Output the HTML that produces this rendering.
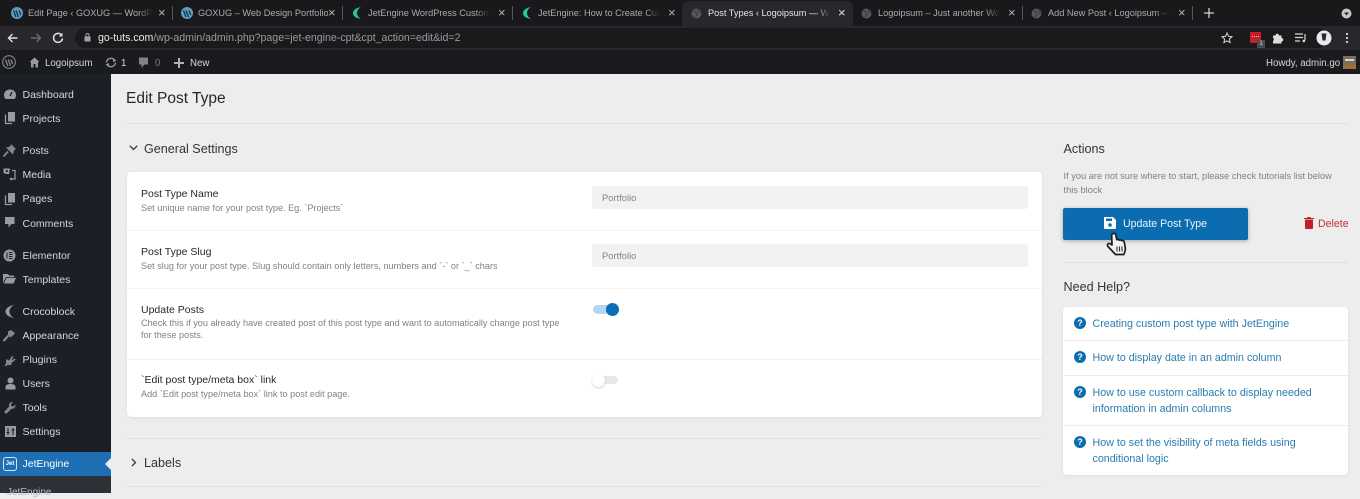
<!DOCTYPE html>
<html><head><meta charset="utf-8"><style>
html,body{margin:0;padding:0}
body{width:1360px;height:493px;overflow:hidden;position:relative;background:#ededed;font-family:"Liberation Sans",sans-serif}
.a,.t{position:absolute;white-space:nowrap}
.tabtxt{position:absolute;top:7px;font-size:9.2px;line-height:12px;color:#a9abae;white-space:nowrap;overflow:hidden;-webkit-mask-image:linear-gradient(90deg,#000 88%,transparent);mask-image:linear-gradient(90deg,#000 88%,transparent)}
.x{position:absolute;top:6px;font-size:13px;line-height:14px;color:#b0b2b5}
.sep{position:absolute;top:6px;width:1px;height:14px;background:#55575a}
.m{position:absolute;left:22.5px;font-size:10.5px;line-height:14px;color:#d5d7d9;white-space:nowrap}
.ttl{position:absolute;left:141px;font-size:10.5px;line-height:13px;color:#23282d;white-space:nowrap}
.dsc{position:absolute;left:141px;font-size:9.15px;line-height:12px;color:#7d8287;white-space:nowrap}
.inp{position:absolute;left:592px;width:436px;height:23px;background:#f2f2f2;border-radius:3px;font-size:9.4px;line-height:23px;color:#80858a;text-indent:10px}
.hl{position:absolute;left:1064px;width:284px;height:1px;background:#ebedef}
.lnk{position:absolute;left:1092.5px;font-size:10.7px;line-height:16px;color:#2a7cb0;white-space:nowrap}
.q{position:absolute;left:1074px;width:12px;height:12px;border-radius:50%;background:#0b6cb0;color:#fff;font-size:9px;font-weight:bold;line-height:12px;text-align:center}
svg{position:absolute;overflow:visible}
</style></head><body>
<!-- browser chrome -->
<div class="a" style="left:0;top:0;width:1360px;height:26px;background:#19191b"></div>
<div class="a" style="left:682px;top:1px;width:171px;height:25px;background:#28282c;border-radius:7px 7px 0 0"></div>
<div class="a" style="left:0;top:26px;width:1360px;height:24px;background:#28282c"></div>
<div class="a" style="left:75px;top:28px;width:1253px;height:20px;background:#1a1a1c;border-radius:10px"></div>
<div class="a" style="left:0;top:50px;width:1360px;height:24px;background:#191b1f"></div>

<svg style="left:11px;top:7px" width="12" height="12"><circle cx="6" cy="6" r="6" fill="#5c9bc4"/><path d="M2.5 3.500L5 10M5 3.500L7.500 10M8 3.500L9.800 8" stroke="#1d2c38" stroke-width="1.200" fill="none"/></svg>
<div class="tabtxt" style="left:28px;width:125px">Edit Page ‹ GOXUG — WordPress</div><div class="x" style="left:158px">×</div><div class="sep" style="left:172px"></div>
<svg style="left:181px;top:7px" width="12" height="12"><circle cx="6" cy="6" r="6" fill="#5c9bc4"/><path d="M2.5 3.500L5 10M5 3.500L7.500 10M8 3.500L9.800 8" stroke="#1d2c38" stroke-width="1.200" fill="none"/></svg>
<div class="tabtxt" style="left:198px;width:130px;-webkit-mask-image:none;mask-image:none">GOXUG – Web Design Portfolio</div><div class="x" style="left:328px">×</div><div class="sep" style="left:342px"></div>
<svg style="left:352px;top:7px" width="10" height="12"><path d="M9 0C3 1 1 4 1 6c0 2.500 2 5 8 6-2.500-1.500-4-3.500-4-6s1.500-4.500 4-6z" fill="#25c79c"/></svg>
<div class="tabtxt" style="left:368px;width:122px">JetEngine WordPress Custom Post</div><div class="x" style="left:498px">×</div><div class="sep" style="left:512px"></div>
<svg style="left:522px;top:7px" width="10" height="12"><path d="M9 0C3 1 1 4 1 6c0 2.500 2 5 8 6-2.500-1.500-4-3.500-4-6s1.500-4.500 4-6z" fill="#25c79c"/></svg>
<div class="tabtxt" style="left:538px;width:122px">JetEngine: How to Create Custom</div><div class="x" style="left:668px">×</div>
<svg style="left:691px;top:8px" width="11" height="11"><circle cx="5.500" cy="5.500" r="5" fill="#55575b"/><path d="M2 3l3 1 1 3-2 2M7 1l1 3 2 1" stroke="#38393c" fill="none"/></svg>
<div class="tabtxt" style="left:708px;width:122px;color:#e4e5e6">Post Types ‹ Logoipsum — WordPress</div><div class="x" style="left:838px;color:#e0e0e0">×</div>
<svg style="left:861px;top:8px" width="11" height="11"><circle cx="5.500" cy="5.500" r="5" fill="#55575b"/><path d="M2 3l3 1 1 3-2 2M7 1l1 3 2 1" stroke="#38393c" fill="none"/></svg>
<div class="tabtxt" style="left:878px;width:122px">Logoipsum – Just another WordPress</div><div class="x" style="left:1008px">×</div><div class="sep" style="left:1022px"></div>
<svg style="left:1031px;top:8px" width="11" height="11"><circle cx="5.500" cy="5.500" r="5" fill="#55575b"/><path d="M2 3l3 1 1 3-2 2M7 1l1 3 2 1" stroke="#38393c" fill="none"/></svg>
<div class="tabtxt" style="left:1048px;width:122px">Add New Post ‹ Logoipsum — WordPress</div><div class="x" style="left:1178px">×</div><div class="sep" style="left:1192px"></div>
<svg style="left:1204px;top:8px" width="10" height="10"><path d="M5 0v10M0 5h10" stroke="#d0d1d3" stroke-width="1.300"/></svg>
<svg style="left:1341px;top:8px" width="11" height="11"><circle cx="5.500" cy="5.500" r="5" fill="#c5c6c8"/><path d="M3 4.500h5L5.500 7.500z" fill="#28282c"/></svg>

<!-- toolbar -->
<svg style="left:7px;top:32px" width="12" height="12"><path d="M10.500 6H1.500M5.500 2L1.500 6l4 4" stroke="#dedfe0" stroke-width="1.400" fill="none"/></svg>
<svg style="left:30px;top:32px" width="12" height="12"><path d="M1 6h9.500M6.500 2l4 4-4 4" stroke="#6a6b6e" stroke-width="1.400" fill="none"/></svg>
<svg style="left:52px;top:32px" width="12" height="12"><path d="M9.700 3.200A4.500 4.500 0 1 0 10.500 6.500" stroke="#dedfe0" stroke-width="1.500" fill="none"/><path d="M10.500 0.800v3.700H6.800z" fill="#dedfe0"/></svg>
<svg style="left:84px;top:33px" width="7" height="9"><rect x="0.500" y="3.500" width="6" height="5" rx=".5" fill="#a2a3a6"/><path d="M2 3.500V2a1.500 1.500 0 0 1 3 0v1.500" stroke="#a2a3a6" fill="none"/></svg>
<div class="t" style="left:98px;top:31px;font-size:10.600px;line-height:14px;color:#9a9b9e"><span style="color:#e6e7e8">go-tuts.com</span>/wp-admin/admin.php?page=jet-engine-cpt&amp;cpt_action=edit&amp;id=2</div>
<svg style="left:1221px;top:32px" width="12" height="12"><path d="M6 1l1.500 3.300 3.500.4-2.600 2.400.7 3.500L6 8.800l-3.100 1.800.7-3.500L1 4.700l3.500-.4z" stroke="#d5d6d8" fill="none"/></svg>
<div class="a" style="left:1250px;top:32px;width:11px;height:11px;background:#c3202b"></div>
<div class="a" style="left:1252px;top:36px;width:7px;height:1px;border-top:1px dotted #f2c0c3"></div>
<div class="a" style="left:1257px;top:40px;width:8px;height:8px;background:#4b4c4f;color:#ddd;font-size:6px;line-height:8px;text-align:center">1</div>
<svg style="left:1272px;top:32px" width="12" height="12"><path d="M1 3.500h2.500a1.700 1.700 0 0 1 3.400 0H9.500V6a1.700 1.700 0 0 1 0 3.400V11.500H1V9a1.700 1.700 0 0 0 0-3z" fill="#dcdddf"/></svg>
<svg style="left:1295px;top:33px" width="12" height="10"><path d="M0 1h8M0 4.500h8M0 8h5" stroke="#d5d6d8" stroke-width="1.200"/><path d="M10 1v6.500" stroke="#d5d6d8" stroke-width="1.200"/><circle cx="8.800" cy="8" r="1.300" fill="#d5d6d8"/></svg>
<svg style="left:1316px;top:30px" width="16" height="16"><circle cx="8" cy="8" r="7.500" fill="#e9eaeb"/><path d="M5.500 3.500h5L9.500 10.500h-3z" fill="#28282c"/></svg>
<svg style="left:1345px;top:32px" width="4" height="12"><circle cx="2" cy="2" r="1.100" fill="#d5d6d8"/><circle cx="2" cy="6" r="1.100" fill="#d5d6d8"/><circle cx="2" cy="10" r="1.100" fill="#d5d6d8"/></svg>

<!-- admin bar -->
<svg style="left:2px;top:55px" width="14" height="14"><circle cx="7" cy="7" r="6.300" fill="none" stroke="#85888c" stroke-width="1.100"/><path d="M3.500 4.500L5.800 11M6.300 4.500L8.500 11M9 4.500l1.500 4.500" stroke="#85888c" stroke-width="1.300" fill="none"/></svg>
<svg style="left:29px;top:57px" width="11" height="11"><path d="M5.500 0.500L10.500 5H9v5.500H6.500V7h-2v3.500H2V5H.5z" fill="#989a9d"/></svg>
<div class="t" style="left:45px;top:57px;font-size:9.700px;line-height:13px;color:#d6d8da">Logoipsum</div>
<svg style="left:105px;top:57px" width="12" height="11"><path d="M1.500 5.500a4.500 4.500 0 0 1 8-2.500M10.500 5.500a4.500 4.500 0 0 1-8 2.500" stroke="#989a9d" stroke-width="1.300" fill="none"/><path d="M8 1l3.500 2.800L8 5zM4 6L.5 7.500 4 10z" fill="#989a9d"/></svg>
<div class="t" style="left:121px;top:57px;font-size:9.700px;line-height:13px;color:#d6d8da">1</div>
<svg style="left:138px;top:57px" width="11" height="12"><path d="M1 .5h9v7H6.500L3.500 11V7.500H1z" fill="#808285"/></svg>
<div class="t" style="left:155px;top:57px;font-size:9.700px;line-height:13px;color:#777a7d">0</div>
<svg style="left:174px;top:58px" width="10" height="10"><path d="M5 0v10M0 5h10" stroke="#b0b2b4" stroke-width="2"/></svg>
<div class="t" style="left:190px;top:57px;font-size:9.700px;line-height:13px;color:#d6d8da">New</div>
<div class="t" style="left:1266px;top:57px;font-size:9.700px;line-height:13px;color:#d6d8da">Howdy, admin.go</div>
<div class="a" style="left:1343px;top:56px;width:13px;height:13px;background:#7d705a"></div>
<div class="a" style="left:1345px;top:59px;width:9px;height:2px;background:#d5d5ce"></div>
<div class="a" style="left:1343px;top:65px;width:13px;height:4px;background:#a06f38"></div>

<!-- sidebar -->
<div class="a" style="left:0;top:74px;width:111px;height:419px;background:#1c2026"></div>
<svg style="left:4px;top:88px" width="12" height="12"><path d="M0 7a6 5.500 0 0 1 12 0c0 1.500-.5 3-1.500 4h-9C.5 10 0 8.500 0 7z" fill="#999b9e"/><path d="M6 8l2-4" stroke="#1c2026" stroke-width="1.300"/></svg>
<div class="m" style="top:88px">Dashboard</div>
<svg style="left:5px;top:112px" width="10" height="12"><path d="M3 0h7v9.500H3z" fill="#999b9e"/><path d="M.500 2.500v9h6.500" stroke="#999b9e" stroke-width="1.300" fill="none"/></svg>
<div class="m" style="top:112px">Projects</div>
<svg style="left:3px;top:144px" width="13" height="13"><path d="M8 0l5 5-1.500.8-1 2.200-.5 2.500L3 3.500 5.500 3 7.500 2z" fill="#85888b"/><path d="M5 7.500L.5 12.500" stroke="#85888b" stroke-width="1.800"/></svg>
<div class="m" style="top:144px">Posts</div>
<svg style="left:3px;top:168px" width="13" height="13"><path d="M.5 0.500h6l.8 1.500h-1v4H3.500L.5 5z" fill="#999b9e"/><circle cx="3.800" cy="3" r="1.100" fill="#1c2026"/><path d="M9 2.500h3V11h-4" stroke="#999b9e" stroke-width="1.200" fill="none"/><circle cx="8" cy="11" r="1.200" fill="#999b9e"/></svg>
<div class="m" style="top:168px">Media</div>
<svg style="left:5px;top:193px" width="10" height="12"><path d="M3 0h7v9.500H3z" fill="#999b9e"/><path d="M.500 2.500v9h6.500" stroke="#999b9e" stroke-width="1.300" fill="none"/></svg>
<div class="m" style="top:192px">Pages</div>
<svg style="left:5px;top:217px" width="10" height="12"><path d="M0 0h9.500v7H6.500L3.500 10.500V7H0z" fill="#999b9e"/></svg>
<div class="m" style="top:217px">Comments</div>
<svg style="left:3px;top:249px" width="13" height="13"><circle cx="6.500" cy="6.500" r="6" fill="#999b9e"/><path d="M4 3.500v6M6 3.500h3.500M6 5.500h3.500M6 7.500h3.500M6 9.500h3.500" stroke="#1c2026" stroke-width="1"/></svg>
<div class="m" style="top:249px">Elementor</div>
<svg style="left:3px;top:273px" width="13" height="11"><path d="M0 1h5l1 1.500h5V4H3L0 10z" fill="#999b9e"/><path d="M3.500 4.800H13L10.500 10.500H1z" fill="#999b9e"/></svg>
<div class="m" style="top:273px">Templates</div>
<svg style="left:5px;top:305px" width="9" height="13"><path d="M9 0C3 1 .5 4 .5 6.500S3 12 9 13C6.500 11.500 4.500 9.500 4.500 6.500S6.500 1.500 9 0z" fill="#999b9e"/></svg>
<div class="m" style="top:305px">Crocoblock</div>
<svg style="left:3px;top:329px" width="13" height="13"><path d="M5 2.500L8 1l4 3-2 2.500-2.500 2L5 6z" fill="#85888b"/><path d="M5.500 6.500L.5 12" stroke="#85888b" stroke-width="2.200"/></svg>
<div class="m" style="top:329px">Appearance</div>
<svg style="left:4px;top:354px" width="12" height="12"><path d="M2 5L5 6.500 8 2l1.500 1L7 6.500l4-2 .5 1.300L8 8.500 7 11H3.500L2.500 12H.5L2 9.500z" fill="#85888b"/></svg>
<div class="m" style="top:353px">Plugins</div>
<svg style="left:5px;top:377px" width="11" height="13"><circle cx="5.500" cy="3.500" r="3" fill="#999b9e"/><path d="M.5 12.500V10c0-2 2-3 5-3s5 1 5 3v2.500z" fill="#999b9e"/></svg>
<div class="m" style="top:377px">Users</div>
<svg style="left:4px;top:402px" width="12" height="12"><path d="M11.500 2.500l-2 2-2-.5-.5-2 2-1.800C7 -.5 5 1 5 3c0 .7.200 1 .200 1.500L.5 9.500c-.5 1 1 2.500 2 2L7.500 6.800C9.800 7.300 12 5 11.500 2.500z" fill="#85888b"/></svg>
<div class="m" style="top:401px">Tools</div>
<svg style="left:5px;top:426px" width="11" height="11"><rect width="11" height="11" fill="#999b9e"/><path d="M3 2v7M8 2v7M1.500 6.500h3M6.500 4h3" stroke="#1c2026" stroke-width="1.100"/></svg>
<div class="m" style="top:425px">Settings</div>
<div class="a" style="left:0;top:452px;width:111px;height:24px;background:#1f6fb5"></div>
<div class="a" style="left:3px;top:457px;width:14px;height:14px;border:1px solid #d5e4f2;border-radius:3px;box-sizing:border-box;color:#fff;font-size:6px;font-weight:bold;line-height:12px;text-align:center">Jet</div>
<div class="m" style="top:457px;color:#fff">JetEngine</div>
<div class="a" style="left:105px;top:458px;width:0;height:0;border-top:6px solid transparent;border-bottom:6px solid transparent;border-right:6px solid #ededed"></div>
<div class="a" style="left:0;top:476px;width:111px;height:17px;background:#2c3137"></div>
<div class="t" style="left:7px;top:486px;font-size:10px;line-height:13px;color:#b4b8bc">JetEngine</div>

<!-- heading -->
<div class="t" style="left:126px;top:89px;font-size:15.500px;line-height:19px;color:#23282d">Edit Post Type</div>
<div class="a" style="left:126px;top:123px;width:1222px;height:1px;background:#e1e2e3"></div>
<svg style="left:129px;top:145px" width="9" height="6"><path d="M.8.800L4.500 4.500 8.200.800" stroke="#30363b" stroke-width="1.300" fill="none"/></svg>
<div class="t" style="left:144px;top:142px;font-size:12.600px;line-height:15px;color:#2f353a">General Settings</div>

<!-- card -->
<div class="a" style="left:127px;top:172px;width:915px;height:245px;background:#fff;border-radius:4px;box-shadow:0 1px 3px rgba(0,0,0,.07)"></div>
<div class="a" style="left:127px;top:230px;width:915px;height:1px;background:#f5f5f6"></div>
<div class="a" style="left:127px;top:288px;width:915px;height:1px;background:#f3f3f4"></div>
<div class="a" style="left:127px;top:359px;width:915px;height:1px;background:#f0f0f1"></div>
<div class="ttl" style="top:188px">Post Type Name</div>
<div class="dsc" style="top:202px">Set unique name for your post type. Eg. `Projects`</div>
<div class="inp" style="top:186px">Portfolio</div>
<div class="ttl" style="top:246px">Post Type Slug</div>
<div class="dsc" style="top:260px">Set slug for your post type. Slug should contain only letters, numbers and `-` or `_` chars</div>
<div class="inp" style="top:244px">Portfolio</div>
<div class="ttl" style="top:304px">Update Posts</div>
<div class="dsc" style="top:317px">Check this if you already have created post of this post type and want to automatically change post type</div>
<div class="dsc" style="top:329px">for these posts.</div>
<div class="a" style="left:593px;top:305px;width:24px;height:9px;background:#b7d6ec;border-radius:5px"></div>
<div class="a" style="left:606px;top:303px;width:13px;height:13px;background:#0b6cb8;border-radius:50%"></div>
<div class="ttl" style="top:374px">`Edit post type/meta box` link</div>
<div class="dsc" style="top:388px">Add `Edit post type/meta box` link to post edit page.</div>
<div class="a" style="left:593px;top:376px;width:25px;height:8px;background:#e7e7e8;border-radius:4px"></div>
<div class="a" style="left:592px;top:374px;width:13px;height:13px;background:#fff;border-radius:50%;box-shadow:0 1px 2px rgba(0,0,0,.2)"></div>

<div class="a" style="left:127px;top:438px;width:914px;height:1px;background:#dddedf"></div>
<svg style="left:131px;top:458px" width="6" height="9"><path d="M.8.800L4.500 4.500.8 8.200" stroke="#30363b" stroke-width="1.300" fill="none"/></svg>
<div class="t" style="left:144px;top:456px;font-size:12.600px;line-height:15px;color:#2f353a">Labels</div>
<div class="a" style="left:127px;top:486px;width:914px;height:1px;background:#dddedf"></div>

<!-- right column -->
<div class="t" style="left:1063.500px;top:142px;font-size:12.600px;line-height:15px;color:#2f353a">Actions</div>
<div class="t" style="left:1063.500px;top:168.500px;font-size:9.270px;line-height:14.500px;color:#7d8287">If you are not sure where to start, please check tutorials list below<br>this block</div>
<div class="a" style="left:1063px;top:208px;width:185px;height:32px;background:#0b6cb0;border-radius:2px;box-shadow:0 1px 4px rgba(0,0,0,.3)"></div>
<svg style="left:1104px;top:217px" width="12" height="12"><path d="M1 0h8l3 3v8a1 1 0 0 1-1 1H1a1 1 0 0 1-1-1V1a1 1 0 0 1 1-1z" fill="#fff"/><rect x="2" y="1.500" width="6" height="2.500" fill="#0b6cb0"/><circle cx="6" cy="8" r="1.800" fill="#0b6cb0"/></svg>
<div class="t" style="left:1123px;top:216.500px;font-size:10.600px;line-height:14px;color:#eef5fa">Update Post Type</div>
<svg style="left:1304px;top:217px" width="10" height="12"><path d="M1 2.500h8V11a1 1 0 0 1-1 1H2a1 1 0 0 1-1-1zM0 1h3l.5-1h3l.5 1h3v1H0z" fill="#c3202b"/></svg>
<div class="t" style="left:1318px;top:216.500px;font-size:10.600px;line-height:14px;color:#c4313b">Delete</div>
<svg style="left:1106px;top:232px" width="24" height="26"><path d="M7 1.500c1.300-.6 2.500.2 2.800 1.400l1 4.800c.8-.6 2-.4 2.400.4.800-.5 2-.2 2.400.6.900-.5 2.100-.2 2.500.8l1.200 6c.3 2.400-.5 5-1.500 7H9.500L2 14.500c-1-1.200-.6-2.600.6-3 .9-.3 2 .2 3.400 1.500L5.700 4C5.500 2.900 6 2 7 1.500z" fill="#f2f2f2" stroke="#1e1e1e" stroke-width="1.700" stroke-linejoin="round"/><path d="M11 14.500v5M13.500 14.500v5M16 14.500v5" stroke="#333" stroke-width="1.100"/></svg>
<div class="a" style="left:1064px;top:262px;width:284px;height:1px;background:#dfe0e1"></div>
<div class="t" style="left:1063.500px;top:280px;font-size:12.600px;line-height:15px;color:#2f353a">Need Help?</div>
<div class="a" style="left:1063px;top:307px;width:285px;height:168px;background:#fff;border-radius:4px;box-shadow:0 1px 3px rgba(0,0,0,.07)"></div>
<div class="hl" style="top:340px"></div><div class="hl" style="top:375px"></div><div class="hl" style="top:425px"></div>
<div class="q" style="top:317px">?</div><div class="lnk" style="top:316px">Creating custom post type with JetEngine</div>
<div class="q" style="top:351px">?</div><div class="lnk" style="top:350px">How to display date in an admin column</div>
<div class="q" style="top:386px">?</div><div class="lnk" style="top:385px">How to use custom callback to display needed</div><div class="lnk" style="top:401px">information in admin columns</div>
<div class="q" style="top:436px">?</div><div class="lnk" style="top:435px">How to set the visibility of meta fields using</div><div class="lnk" style="top:451px">conditional logic</div>
</body></html>
